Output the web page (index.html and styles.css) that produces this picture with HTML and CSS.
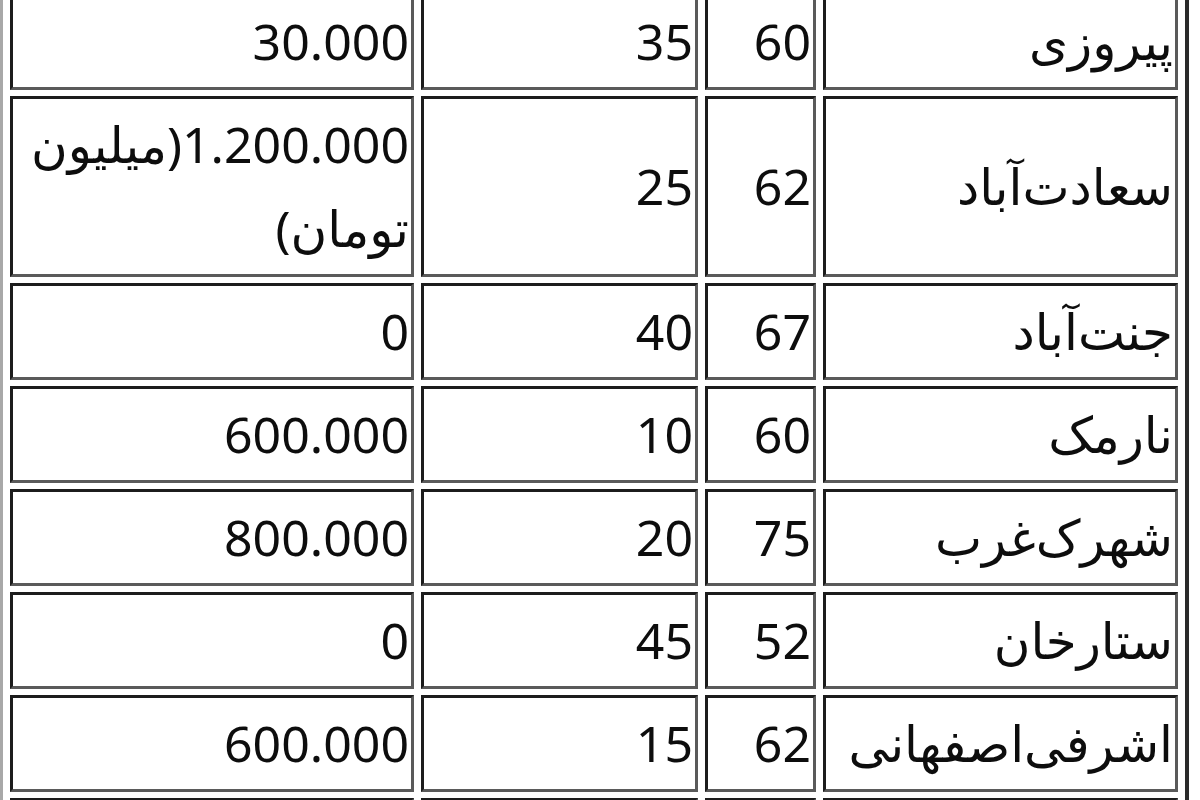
FILE: index.html
```html
<!DOCTYPE html>
<html lang="fa" dir="rtl">
<head>
<meta charset="utf-8">
<title>جدول</title>
<link rel="stylesheet" href="styles.css">
</head>
<body>
<table class="prices">
  <tbody>
    <tr>
      <td class="c-name">پیروزی</td>
      <td class="c-area">60</td>
      <td class="c-age">35</td>
      <td class="c-price">30.000</td>
    </tr>
    <tr>
      <td>سعادت‌آباد</td>
      <td>62</td>
      <td>25</td>
      <td>1.200.000(میلیون تومان)</td>
    </tr>
    <tr>
      <td>جنت‌آباد</td>
      <td>67</td>
      <td>40</td>
      <td>0</td>
    </tr>
    <tr>
      <td>نارمک</td>
      <td>60</td>
      <td>10</td>
      <td>600.000</td>
    </tr>
    <tr>
      <td>شهرک‌غرب</td>
      <td>75</td>
      <td>20</td>
      <td>800.000</td>
    </tr>
    <tr>
      <td>ستارخان</td>
      <td>52</td>
      <td>45</td>
      <td>0</td>
    </tr>
    <tr>
      <td>اشرفی‌اصفهانی</td>
      <td>62</td>
      <td>15</td>
      <td>600.000</td>
    </tr>
    <tr>
      <td>&nbsp;</td>
      <td>&nbsp;</td>
      <td>&nbsp;</td>
      <td>&nbsp;</td>
    </tr>
  </tbody>
</table>
</body>
</html>
```
FILE: styles.css
```css
html, body {
  margin: 0;
  padding: 0;
  background: #ffffff;
  overflow: hidden;
}

body {
  direction: rtl;
  font-family: Tahoma, "Noto Sans", "DejaVu Sans", sans-serif;
  color: #0d0d0d;
}

.prices {
  direction: rtl;
  table-layout: fixed;
  width: 1186px;
  margin: -16px auto 0 0;
  border-collapse: separate;
  border-spacing: 7px 6px;
  border-style: solid;
  border-width: 3px 4px 3px 3px;
  border-color: #a8a8a8 #2a2a2a #2a2a2a #a8a8a8;
}

.prices td {
  box-sizing: border-box;
  padding: 3px 2px 4px 4px;
  text-align: right;
  vertical-align: middle;
  font-size: 50px;
  line-height: 84px;
  white-space: normal;
  border-style: solid;
  border-width: 3px;
  border-color: #1c1c1c #5a5a5a #5a5a5a #1c1c1c;
}

.c-name { width: 355px; }
.c-area { width: 111px; }
.c-age { width: 277px; }
.c-price { width: 404px; }
```
